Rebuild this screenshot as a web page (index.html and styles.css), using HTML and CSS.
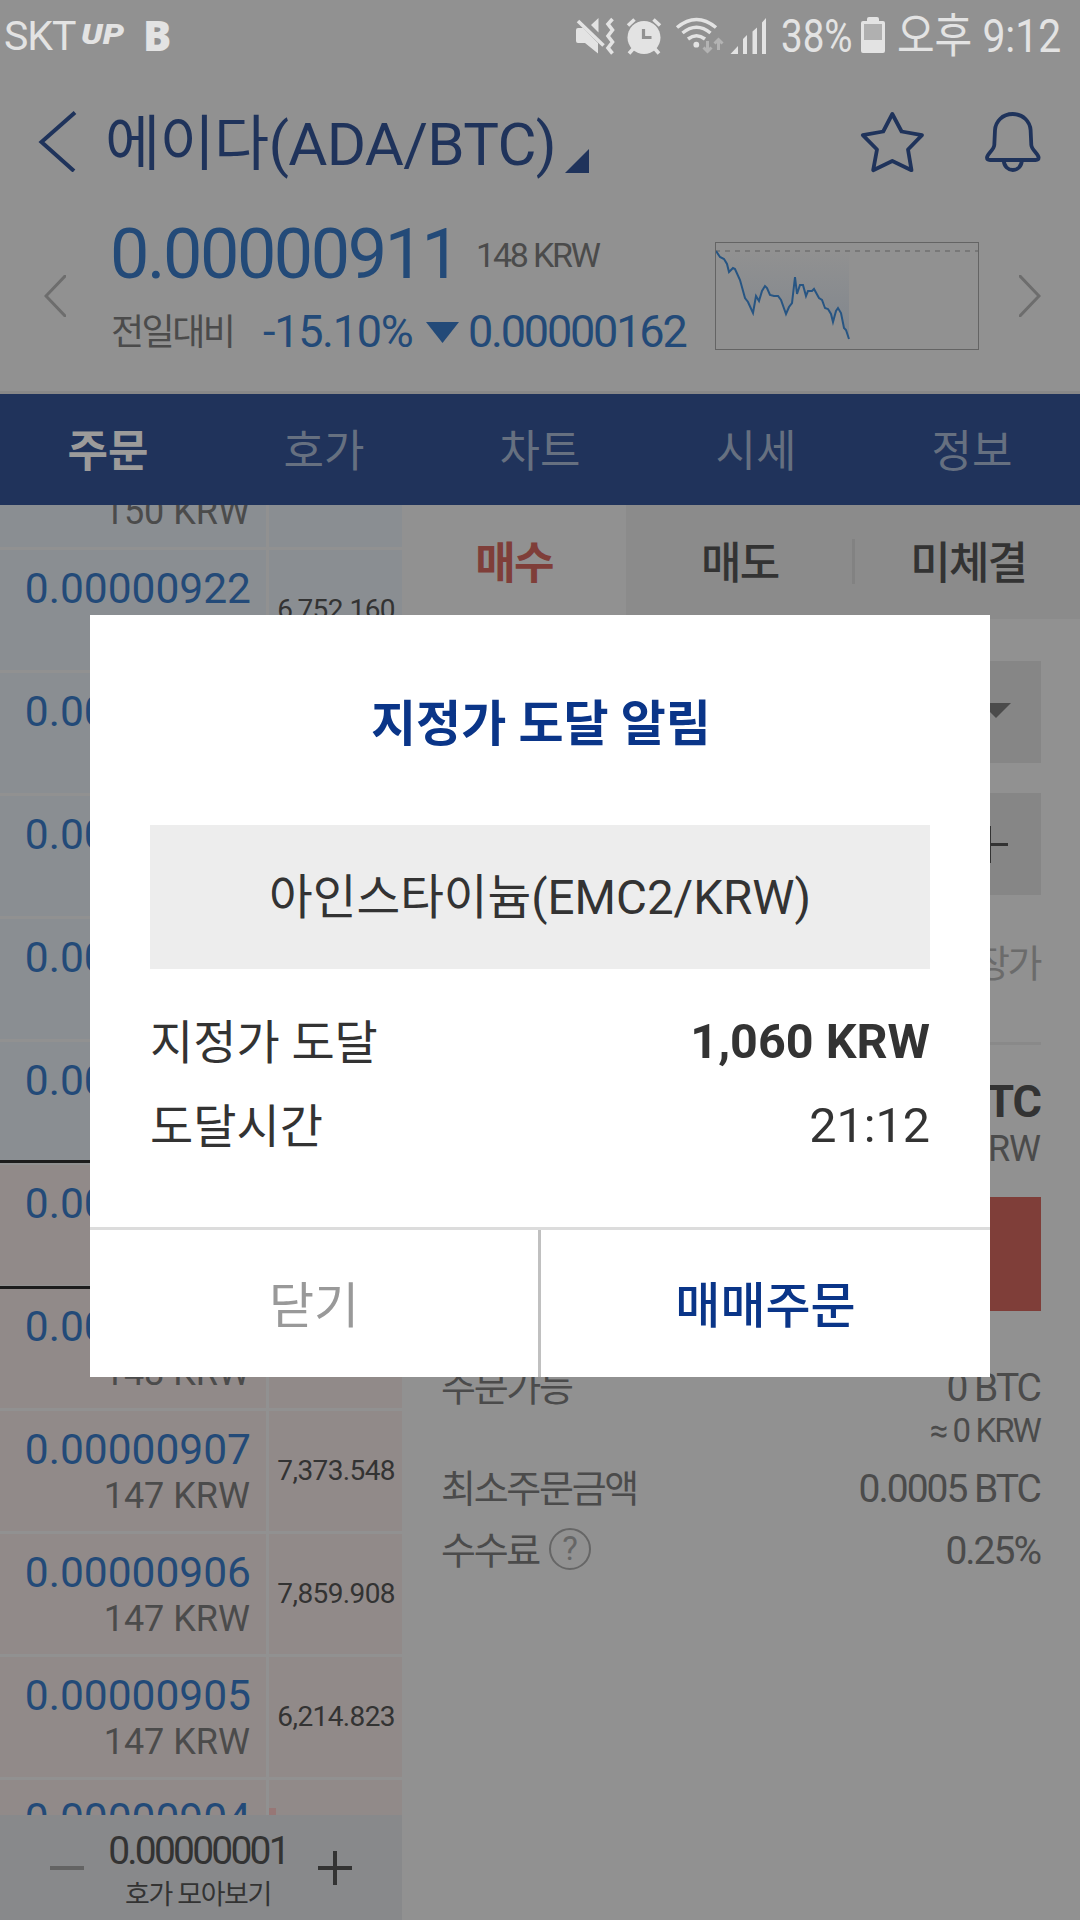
FILE: index.html
```html
<!DOCTYPE html>
<html lang="ko">
<head>
    <meta charset="UTF-8">
    <meta name="viewport" content="width=device-width, initial-scale=1.0">
    <title>에이다(ADA/BTC)</title>
    <link rel="stylesheet" href="styles.css">
</head>
<body>
    <div class="app">
        <div class="status-bar">
            <span class="carrier">SKT</span>
            <span class="logo-up">UP</span>
            <span class="logo-b">B</span>
            <svg class="status-icons" width="192" height="40" viewBox="576 15 192 40">
                <!-- mute / vibrate -->
                <g fill="#e3e3e3">
                    <path d="M576 29q0-2 2-2h5l15 15v10.500l-13-10.500h-7q-2 0-2-2z"/>
                    <path d="M591 24l7.500-7v14.500z"/>
                </g>
                <path d="M578 20l25.500 24.500" stroke="#e3e3e3" stroke-width="3.600"/>
                <path d="M612.500 18l-4.500 5 4.500 6-4.500 6 4.500 6-4.500 6 4.500 5.500" fill="none" stroke="#e3e3e3" stroke-width="3.600"/>
                <!-- alarm -->
                <circle cx="644" cy="36.500" r="16.500" fill="#e3e3e3"/>
                <path d="M628 24.500l6.500-6M660 24.500l-6.500-6M633 48l-4 4.500M655 48l4 4.500" stroke="#e3e3e3" stroke-width="3.600"/>
                <path d="M643.500 28v8.500h8" fill="none" stroke="#929292" stroke-width="3.200"/>
                <!-- wifi -->
                <g fill="none" stroke="#e3e3e3" stroke-width="3.500">
                    <path d="M677 26.500q19.500-16 39 0"/>
                    <path d="M682.500 32q14-11.500 28 0"/>
                    <path d="M688 38q8.500-6.500 17 0"/>
                </g>
                <circle cx="696.300" cy="43.700" r="2.900" fill="#e3e3e3"/>
                <path d="M707.500 40v10M703.500 46.500l4 4 4-4M718.500 49v-10M714.500 42.500l4-4 4 4" fill="none" stroke="#b3b3b3" stroke-width="3"/>
                <!-- signal -->
                <path d="M730.500 53l7.500-8v8zM743 53v-15l4-4v19zM752.500 53v-22.500l4.500-4v26.500zM762 53v-31.500l4-4.500v36z" fill="#e3e3e3"/>
            </svg>
            <span class="percent">38%</span>
            <svg class="battery" width="24" height="36" viewBox="0 0 24 36">
                <path d="M6 4V2q0-2 2-2h8q2 0 2 2v2h4q2 0 2 2v28q0 2-2 2H2q-2 0-2-2V6q0-2 2-2z" fill="#e3e3e3"/>
                <rect x="3" y="7" width="18" height="16" fill="#b0b0b0"/>
            </svg>
            <span class="clock">오후 9:12</span>
        </div>

        <div class="title-bar">
            <svg class="back" width="40" height="62" viewBox="0 0 40 62">
                <path d="M38 2.500L4.500 32 37 61" fill="none" stroke="#1f335b" stroke-width="4"/>
            </svg>
            <h1>에이다(ADA/BTC)</h1>
            <svg class="corner" width="24" height="24" viewBox="0 0 24 24">
                <path d="M0 24L24 0v24z" fill="#1f335b"/>
            </svg>
            <svg class="star" width="68" height="64" viewBox="0 0 68 64">
                <path d="M34.300 4L43.600 21.500 64 25.200 50 39.500 53.500 60.200 34.300 51 15.200 60.200 19 39.500 4.800 25.200 25.200 21.500z" fill="none" stroke="#1f335b" stroke-width="3.800" stroke-linejoin="round"/>
            </svg>
            <svg class="bell" width="64" height="64" viewBox="0 0 64 64">
                <path d="M31.800 4C21 4 14.500 12 14 20l-.7 15c-.3 5-7 8.500-7.300 12.500 0 1.700 1 2.500 3 2.500h45.600c2 0 3-.8 3-2.500-.3-4-7-7.500-7.300-12.500l-.7-15C49 12 42.500 4 31.800 4z" fill="none" stroke="#1f335b" stroke-width="3.800"/>
                <path d="M22.800 50c0 13.300 18 13.300 18 0" fill="none" stroke="#1f335b" stroke-width="3.800"/>
            </svg>
        </div>

        <div class="quote">
            <svg class="prev" width="22" height="42" viewBox="0 0 22 42">
                <path d="M23-1L2 21l21 22" fill="none" stroke="#6d6d6d" stroke-width="3"/>
            </svg>
            <div class="quote-text">
                <div class="price-line">
                    <span class="price">0.00000911</span>
                    <span class="krw">148 KRW</span>
                </div>
                <div class="change-line">
                    <span class="label">전일대비</span>
                    <span class="percent-change">-15.10%</span>
                    <svg class="down" width="33" height="21" viewBox="0 0 33 21">
                        <path d="M0 0h33L16.500 21z" fill="#234a78"/>
                    </svg>
                    <span class="diff">0.00000162</span>
                </div>
            </div>
            <svg class="chart" width="264" height="108" viewBox="0 0 264 108">
                <defs>
                    <linearGradient id="area" x1="0" y1="0" x2="0" y2="1">
                        <stop offset="0" stop-color="#234a78" stop-opacity="0"/>
                        <stop offset="1" stop-color="#234a78" stop-opacity=".15"/>
                    </linearGradient>
                </defs>
                <path d="M1 9L6 16 10 18 14 30 19 26 25 38 30 56 34 61 38 71 41 54 44 59 50 44 55 53 63 54 71 72 77 62 80 35 82 52 86 42 91 54 99 47 107 58 114 67 118 80 123 66 127 77 130 87 134 96V9z" fill="url(#area)"/>
                <path d="M0 9h264" stroke="#787878" stroke-width="2" stroke-dasharray="5 5"/>
                <polyline points="1,9 5,15 9,17 12,22 14,30 18,26 20,27 25,38 30,56 33,60 38,71 41,54 44,59 47,49 50,44 52,46 55,53 59,54 63,54 66,58 71,72 74,65 77,61 80,35 82,52 85,43 88,43 91,54 93,49 97,49 99,47 104,56 107,58 110,66 113,67 116,72 118,80 121,69 123,66 126,71 129,86 131,88 134,97" fill="none" stroke="#275583" stroke-width="2"/>
                <rect x=".5" y=".5" width="263" height="107" fill="none" stroke="#646464"/>
            </svg>
            <svg class="next" width="22" height="42" viewBox="0 0 22 42">
                <path d="M-1-1l21 22L-1 43" fill="none" stroke="#6d6d6d" stroke-width="3"/>
            </svg>
        </div>

        <nav class="tabs">
            <a class="active">주문</a>
            <a>호가</a>
            <a>차트</a>
            <a>시세</a>
            <a>정보</a>
        </nav>

        <div class="content">
            <div class="book">
                <div class="book-list">
                    <div class="row sell">
                        <div class="cell"><b></b><i>150 KRW</i></div>
                        <div class="amount"></div>
                    </div>
                    <div class="row sell">
                        <div class="cell"><b>0.00000922</b></div>
                        <div class="amount">6,752.160</div>
                    </div>
                    <div class="row sell">
                        <div class="cell"><b>0.00000921</b></div>
                        <div class="amount"></div>
                    </div>
                    <div class="row sell">
                        <div class="cell"><b>0.00000920</b></div>
                        <div class="amount"></div>
                    </div>
                    <div class="row sell">
                        <div class="cell"><b>0.00000919</b></div>
                        <div class="amount"></div>
                    </div>
                    <div class="row sell">
                        <div class="cell"><b>0.00000918</b></div>
                        <div class="amount"></div>
                    </div>
                    <div class="row buy current">
                        <div class="cell"><b>0.00000911</b></div>
                        <div class="amount"></div>
                    </div>
                    <div class="row buy">
                        <div class="cell"><b>0.00000908</b><i>148 KRW</i></div>
                        <div class="amount"></div>
                    </div>
                    <div class="row buy">
                        <div class="cell"><b>0.00000907</b><i>147 KRW</i></div>
                        <div class="amount">7,373.548</div>
                    </div>
                    <div class="row buy">
                        <div class="cell"><b>0.00000906</b><i>147 KRW</i></div>
                        <div class="amount">7,859.908</div>
                    </div>
                    <div class="row buy">
                        <div class="cell"><b>0.00000905</b><i>147 KRW</i></div>
                        <div class="amount">6,214.823</div>
                    </div>
                    <div class="row buy">
                        <div class="cell"><b>0.00000904</b></div>
                        <div class="amount"><span class="volume"></span></div>
                    </div>
                </div>
                <div class="book-footer">
                    <svg width="34" height="34" viewBox="0 0 34 34"><path d="M0 17h34" stroke="#636363" stroke-width="4"/></svg>
                    <div class="unit">
                        <div class="unit-value">0.00000001</div>
                        <div class="unit-label">호가 모아보기</div>
                    </div>
                    <svg width="34" height="34" viewBox="0 0 34 34"><path d="M0 17h34M17 0v34" stroke="#333" stroke-width="4"/></svg>
                </div>
            </div>

            <div class="order">
                <div class="order-tabs">
                    <a class="on">매수</a>
                    <a>매도</a>
                    <span class="bar"></span>
                    <a>미체결</a>
                </div>
                <div class="form">
                    <div class="field select">
                        <svg width="30" height="15" viewBox="0 0 30 15"><path d="M0 0h30L15 15z" fill="#4b4b4b"/></svg>
                    </div>
                    <div class="field stepper">
                        <svg width="37" height="37" viewBox="0 0 37 37"><path d="M0 18.500h37M18.500 0v37" stroke="#333" stroke-width="3"/></svg>
                    </div>
                    <div class="market">시장가</div>
                    <div class="total">0 BTC</div>
                    <div class="total-krw">0 KRW</div>
                    <div class="buy-button"></div>
                    <div class="info">
                        <span>주문가능</span><span>0 BTC</span>
                    </div>
                    <div class="approx">≈ 0 KRW</div>
                    <div class="info">
                        <span>최소주문금액</span><span>0.0005 BTC</span>
                    </div>
                    <div class="info fee">
                        <span>수수료</span><span class="help">?</span><span class="rate">0.25%</span>
                    </div>
                </div>
            </div>
        </div>

        <div class="modal">
            <h2>지정가 도달 알림</h2>
            <div class="coin">아인스타이늄(EMC2/KRW)</div>
            <div class="detail">
                <span>지정가 도달</span><strong>1,060 KRW</strong>
            </div>
            <div class="detail">
                <span>도달시간</span><em>21:12</em>
            </div>
            <div class="buttons">
                <button class="close">닫기</button>
                <button class="trade">매매주문</button>
            </div>
        </div>
    </div>
</body>
</html>
```
FILE: styles.css
```css
* {
    box-sizing: border-box;
}
body {
    margin: 0;
    font-family: Roboto, "Noto Sans CJK KR", sans-serif;
}
svg {
    display: block;
    flex: none;
}
.app {
    position: relative;
    display: flex;
    flex-direction: column;
    width: 1080px;
    height: 1920px;
    overflow: hidden;
    background-color: #919191;
    white-space: nowrap;
}

/* status bar */
.status-bar {
    display: flex;
    align-items: center;
    height: 72px;
    padding-left: 4px;
    color: #e3e3e3;
    font-size: 47px;
    line-height: 72px;
}
.status-bar span {
    flex: none;
}
.carrier {
    width: 77px;
    font-size: 41px;
    letter-spacing: -1px;
    line-height: 70px;
}
.logo-up {
    width: 62px;
    margin-top: -2px;
    font-size: 28px;
    font-weight: 900;
    font-style: italic;
    transform: scaleX(1.2);
    transform-origin: left;
}
.logo-b {
    width: 433px;
    margin-top: -3px;
    font-family: "Open Sans", sans-serif;
    font-size: 42px;
    font-weight: 800;
}
.percent {
    width: 80px;
    margin-left: 13px;
    transform: scaleX(0.82);
    transform-origin: left;
}
.battery {
    margin-top: -2px;
}
.clock {
    margin-left: 12px;
    transform: scaleX(0.87);
    transform-origin: left;
}

/* title */
.title-bar {
    display: flex;
    align-items: center;
    height: 145px;
    padding-left: 37px;
}
.back {
    margin-top: -7px;
}
h1 {
    width: 458px;
    margin: 0 0 0 28px;
    color: #1f335b;
    font-size: 60px;
    font-weight: 400;
    letter-spacing: -0.7px;
    line-height: 80px;
}
.corner {
    margin: 33px 0 0 2px;
}
.star {
    margin: -5px 0 0 269px;
}
.bell {
    margin: -5px 0 0 55px;
}

/* quote */
.quote {
    display: flex;
    align-items: center;
    height: 177px;
    padding: 0 0 16px 44px;
    border-bottom: 3px solid #888;
    color: #234a78;
}
.quote-text {
    width: 605px;
    height: 158px;
    margin-left: 44px;
}
.price-line,
.change-line {
    display: flex;
    align-items: center;
}
.price {
    width: 366px;
    font-size: 70px;
    letter-spacing: -2.4px;
    line-height: 74px;
}
.krw {
    margin-top: 2px;
    color: #4b4b4b;
    font-size: 34px;
    letter-spacing: -2.2px;
}
.change-line {
    line-height: 80px;
}
.label {
    width: 153px;
    padding: 2px 0 0 1px;
    color: #4b4b4b;
    font-size: 36px;
    letter-spacing: -2.5px;
}
.percent-change {
    width: 163px;
    font-size: 45px;
    letter-spacing: -1.3px;
}
.diff {
    margin-left: 9px;
    font-size: 45px;
    letter-spacing: -2.2px;
}
.next {
    margin-left: 40px;
}

/* nav tabs */
.tabs {
    display: grid;
    grid-template-columns: repeat(5, 1fr);
    height: 111px;
    padding-top: 4px;
    background-color: #20335b;
    color: #667080;
    font-size: 44px;
    line-height: 108px;
    text-align: center;
}
.tabs .active {
    color: #9c9b9a;
    font-weight: 700;
}

/* order book */
.content {
    display: flex;
    flex: 1;
    min-height: 0;
}
.book {
    display: flex;
    flex-direction: column;
    width: 402px;
}
.book-list {
    flex: 1;
    min-height: 0;
    overflow: hidden;
}
.row {
    position: relative;
    display: grid;
    grid-template-columns: 266px 133px;
    column-gap: 3px;
    height: 123px;
    border-bottom: 3px solid #919191;
}
.row:first-child {
    margin-top: -78px;
}
.sell > div {
    background-color: #8a8e92;
}
.buy > div {
    background-color: #918a89;
}
.current::before {
    content: "";
    position: absolute;
    top: -5px;
    right: 0;
    bottom: -4px;
    left: 0;
    border: solid #1c1c1c;
    border-width: 3px 0;
    z-index: 1;
}
.cell {
    padding: 15px 15px 0 0;
    text-align: right;
}
.cell b {
    display: block;
    height: 48px;
    color: #234a78;
    font-size: 42.5px;
    font-weight: 400;
    line-height: 48px;
}
.cell i {
    display: block;
    padding-right: 1px;
    color: #4b4b4b;
    font-size: 36px;
    font-style: normal;
    line-height: 44px;
}
.amount {
    padding-right: 7px;
    color: #333;
    font-size: 28px;
    letter-spacing: -0.6px;
    line-height: 119px;
    text-align: right;
}
.volume {
    display: block;
    width: 7px;
    height: 60px;
    margin-top: 28px;
    background-color: #977776;
}
.book-footer {
    display: flex;
    justify-content: space-between;
    height: 105px;
    padding: 0 50px;
    background-color: #88898b;
    color: #333;
    text-align: center;
}
.book-footer svg {
    margin-top: 36px;
}
.unit {
    padding-right: 6px;
}
.unit-value {
    padding-top: 11px;
    font-size: 39px;
    letter-spacing: -2.8px;
    line-height: 50px;
}
.unit-label {
    font-size: 27px;
    letter-spacing: -1.4px;
    line-height: 38px;
}

/* order form */
.order {
    flex: 1;
}
.order-tabs {
    display: flex;
    height: 114px;
    background-color: #8b8b8b;
    color: #333;
    font-size: 44px;
    font-weight: 500;
    line-height: 110px;
    text-align: center;
}
.order-tabs a {
    flex: 1;
    padding: 4px 0 0 2px;
    letter-spacing: -1.8px;
}
.order-tabs .on {
    flex: none;
    width: 224px;
    padding-left: 0;
    background-color: #919191;
    color: #7f3e39;
    font-weight: 700;
}
.bar {
    width: 3px;
    height: 45px;
    margin-top: 34px;
    background-color: #828282;
}
.form {
    padding: 42px 39px 0;
    color: #4b4b4b;
    text-align: right;
}
.field {
    display: flex;
    align-items: center;
    justify-content: flex-end;
    height: 102px;
    background-color: #868686;
}
.select {
    padding: 0 30px 4px 0;
}
.stepper {
    margin-top: 30px;
    padding-right: 33px;
}
.market {
    margin-top: 43px;
    padding: 1px 1px 53px 0;
    border-bottom: 3px solid #898989;
    color: #6b6b6b;
    font-size: 38px;
    letter-spacing: -2.5px;
    line-height: 50px;
}
.total {
    margin-top: 32px;
    color: #333;
    font-size: 45px;
    font-weight: 700;
    letter-spacing: -1px;
    line-height: 50px;
}
.total-krw {
    padding-right: 1px;
    font-size: 36px;
    letter-spacing: -1px;
    line-height: 44px;
}
.buy-button {
    height: 114px;
    margin: 26px 0 52px;
    background-color: #7f3e39;
}
.info {
    display: flex;
    justify-content: space-between;
    padding-right: 1px;
    font-size: 39px;
    letter-spacing: -2px;
    line-height: 50px;
}
.info span:first-child {
    font-size: 38px;
    letter-spacing: -2.3px;
}
.approx {
    margin-bottom: 15px;
    padding-right: 1px;
    font-size: 33px;
    letter-spacing: -1.9px;
    line-height: 36px;
}
.fee {
    align-items: center;
    margin-top: 12px;
}
.help {
    width: 42px;
    height: 42px;
    margin: -5px 0 0 10px;
    border: 2.5px solid #666;
    border-radius: 50%;
    color: #666;
    font-size: 33px;
    letter-spacing: 0;
    line-height: 38px;
    text-align: center;
}
.rate {
    margin-left: auto;
}

/* alert modal */
.modal {
    position: absolute;
    top: 615px;
    left: 90px;
    z-index: 2;
    display: flex;
    flex-direction: column;
    width: 900px;
    height: 762px;
    background-color: #fff;
    color: #333;
}
h2 {
    margin: 80px 0 70px;
    padding-left: 2px;
    color: #0a3588;
    font-size: 49px;
    font-weight: 700;
    line-height: 60px;
    text-align: center;
}
.coin {
    height: 144px;
    margin: 0 60px 19px;
    background-color: #ededed;
    font-size: 47.5px;
    line-height: 147px;
    text-align: center;
}
.detail {
    display: flex;
    justify-content: space-between;
    margin: 24px 60px 0;
    font-size: 48.5px;
    line-height: 60px;
}
.detail span {
    padding-top: 1px;
    font-size: 47px;
    line-height: 59px;
}
.detail em {
    font-style: normal;
}
.buttons {
    display: flex;
    height: 150px;
    margin-top: auto;
    border-top: 3px solid #dcdcdc;
}
.buttons button {
    padding: 0 0 4px;
    border: none;
    background: none;
    font-family: inherit;
    font-size: 49px;
}
.buttons .close {
    width: 451px;
    border-right: 3px solid #c0c0c0;
    color: #999;
}
.buttons .trade {
    flex: 1;
    color: #0a3588;
    font-weight: 500;
}
```
